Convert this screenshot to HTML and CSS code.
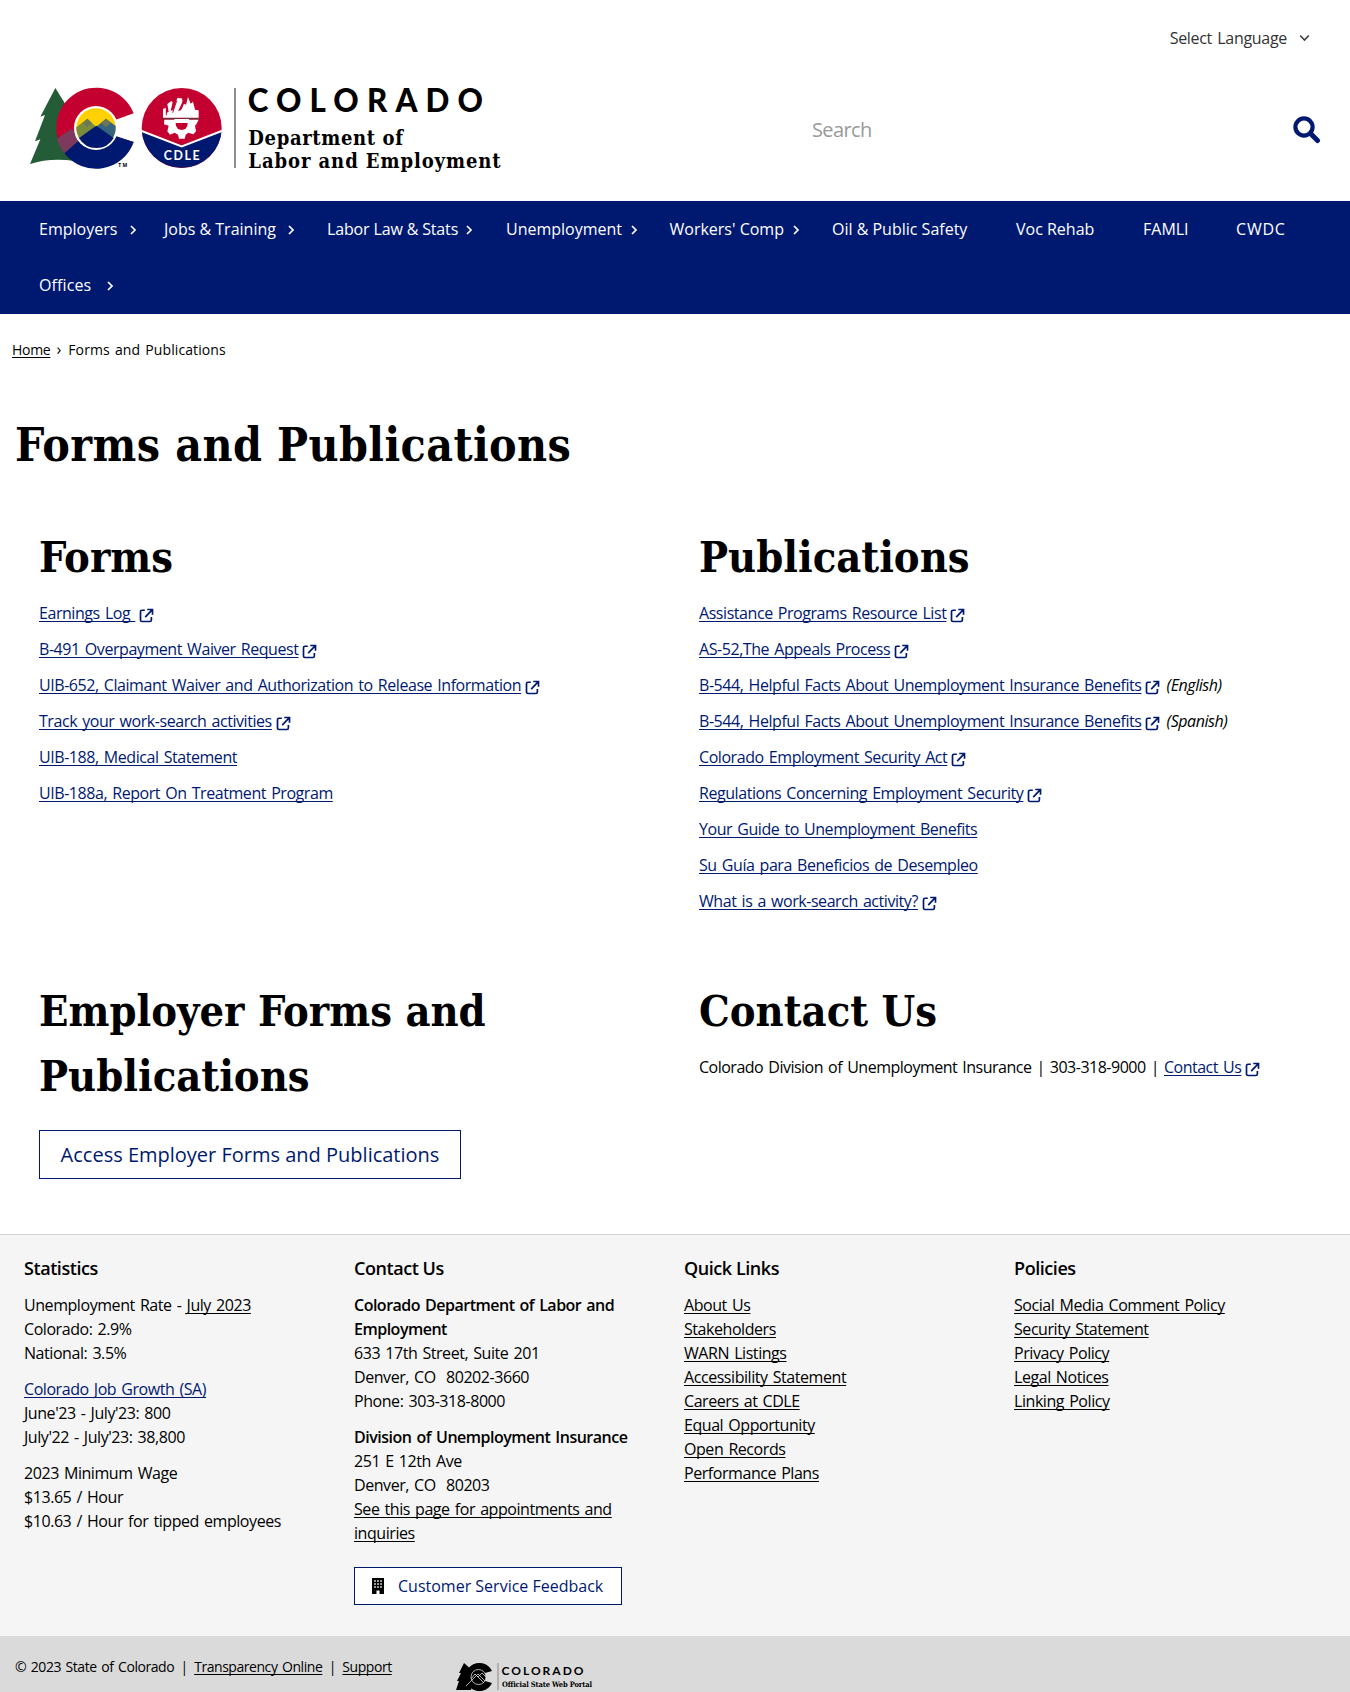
FILE: index.html
```html
<!DOCTYPE html>
<html lang="en">
<head>
<meta charset="utf-8">
<title>Forms and Publications | Department of Labor and Employment</title>
<link rel="stylesheet" href="styles.css">
</head>
<body>
<svg class="defs" width="0" height="0" aria-hidden="true">
  <symbol id="ext" viewBox="0 0 16 16"><path d="M6.2 2.4H3.2Q1.6 2.4 1.6 4V13Q1.6 14.4 3.2 14.4H11.6Q13.2 14.4 13.2 12.8V9.6M8.8 1.6H14.4V7.2M14 2L6.6 9.8" fill="none" stroke="currentColor" stroke-width="1.8"/></symbol>
  <symbol id="chev" viewBox="0 0 8 10"><path d="M2 1L6 5L2 9" fill="none" stroke="currentColor" stroke-width="1.7"/></symbol>
</svg>

<header class="header">
  <div class="language">Select Language
    <svg width="11" height="8" viewBox="0 0 11 8"><path d="M1.2 1.5L5.5 6L9.8 1.5" fill="none" stroke="#444" stroke-width="1.7"/></svg>
  </div>
  <div class="brand-row">
    <svg class="logo" width="480" height="95" viewBox="0 0 1440 285" role="img">
      <path d="M91 24L46 110L60 105L30 184L46 178L15 252Q75 232 150 243L180 140L126 80Z" fill="#235c37"/>
      <path d="M326 100A120 120 0 1 0 326 186L268 168L213 144L270 120Z" fill="#c3002f"/>
      <path d="M95 176L140 146L180 180L118 220Q102 200 95 176Z" fill="#7c3a5c"/>
      <path d="M118 220L214 136L272 168L326 186A120 120 0 0 1 118 220Z" fill="#001970"/>
      <circle cx="213" cy="144" r="66" fill="#fff"/>
      <circle cx="213" cy="144" r="59" fill="#ffd100"/>
      <path d="M154 142L187 116L214 141L165 178Q154 162 154 142Z" fill="#7a8b3c"/>
      <path d="M214 140L243 116L272 138Q273 160 262 176Z" fill="#35647e"/>
      <path d="M162 174L214 137L266 174A60 60 0 0 1 162 174Z" fill="#001970"/>
      <path d="M187 116L201 129L187 142L174 129ZM243 116L257 129L243 142L229 129Z" fill="#6d7758"/>
      <text x="280" y="262" class="tm" textLength="27">TM</text>
      <circle cx="470" cy="144" r="120" fill="#c3002f"/>
      <path d="M350.300 152L470 196L589.700 152A120 120 0 0 1 350.300 152Z" fill="#001970"/>
      <path d="M350 153L470 199L590 153" fill="none" stroke="#fff" stroke-width="6"/>
      <path d="M414 113V87L423 83V99L431 96L427 72L439 63L443 67L437 92L445 90L457 54L471 55L473 65L459 94L470 88L477 71L483 74L489 51L497 71L504 65L510 89L521 91V113Z" fill="#fff"/>
      <path d="M424 82V106M455 62L443 98M475 62L465 92" stroke="#c3002f" stroke-width="3"/>
      <path d="M412 116H525" stroke="#444" stroke-width="3"/>
      <path d="M418 119H521L514 133L510 137L513 154L505 163L490 158L482 164L479 176H462L459 164L449 158L435 164L427 154L431 137L417 133Z" fill="#fff"/>
      <circle cx="470" cy="132" r="18" fill="#c3002f"/>
      <path d="M448 117H492V129H448Z" fill="#fff"/>
      <text x="416" y="239" class="cdle" textLength="108">CDLE</text>
      <path d="M630 24V264" stroke="#555" stroke-width="4"/>
      <text x="668" y="96" class="state" textLength="706">COLORADO</text>
      <text x="670" y="195" class="dept" textLength="464">Department of</text>
      <text x="670" y="265" class="dept" textLength="757">Labor and Employment</text>
    </svg>
    <div class="search"><span>Search</span>
      <svg width="28" height="28" viewBox="0 0 28 28"><circle cx="11" cy="11" r="8.6" fill="none" stroke="#001970" stroke-width="4.2"/><path d="M17.5 17.5L24.5 24.5" stroke="#001970" stroke-width="5" stroke-linecap="round"/></svg>
    </div>
  </div>
</header>

<nav class="nav">
  <a class="n1">Employers<svg><use href="#chev"/></svg></a>
  <a>Jobs &amp; Training<svg><use href="#chev"/></svg></a>
  <a class="n-law">Labor Law &amp; Stats<svg><use href="#chev"/></svg></a>
  <a>Unemployment<svg><use href="#chev"/></svg></a>
  <a>Workers' Comp<svg><use href="#chev"/></svg></a>
  <a>Oil &amp; Public Safety</a>
  <a>Voc Rehab</a>
  <a>FAMLI</a>
  <a class="n-cwdc">CWDC</a>
  <a class="n-offices">Offices<svg><use href="#chev"/></svg></a>
</nav>

<div class="crumbs"><a>Home</a><span class="sep">›</span>Forms and Publications</div>

<main>
  <h1>Forms and Publications</h1>
  <div class="columns">
    <section class="upper">
      <h2>Forms</h2>
      <p><a>Earnings Log&nbsp;</a><svg class="ext"><use href="#ext"/></svg></p>
      <p><a>B-491 Overpayment Waiver Request</a><svg class="ext"><use href="#ext"/></svg></p>
      <p><a>UIB-652, Claimant Waiver and Authorization to Release Information</a><svg class="ext"><use href="#ext"/></svg></p>
      <p><a>Track your work-search activities</a><svg class="ext"><use href="#ext"/></svg></p>
      <p><a>UIB-188, Medical Statement</a></p>
      <p><a>UIB-188a, Report On Treatment Program</a></p>
    </section>
    <section class="upper">
      <h2>Publications</h2>
      <p><a>Assistance Programs Resource List</a><svg class="ext"><use href="#ext"/></svg></p>
      <p><a>AS-52,The Appeals Process</a><svg class="ext"><use href="#ext"/></svg></p>
      <p><a>B-544, Helpful Facts About Unemployment Insurance Benefits</a><svg class="ext"><use href="#ext"/></svg> <em>(English)</em></p>
      <p><a>B-544, Helpful Facts About Unemployment Insurance Benefits</a><svg class="ext"><use href="#ext"/></svg> <em>(Spanish)</em></p>
      <p><a>Colorado Employment Security Act</a><svg class="ext"><use href="#ext"/></svg></p>
      <p><a>Regulations Concerning Employment Security</a><svg class="ext"><use href="#ext"/></svg></p>
      <p><a>Your Guide to Unemployment Benefits</a></p>
      <p><a>Su Guía para Beneficios de Desempleo</a></p>
      <p><a>What is a work-search activity?</a><svg class="ext"><use href="#ext"/></svg></p>
    </section>
    <section>
      <h2>Employer Forms and<br>Publications</h2>
      <a class="button">Access Employer Forms and Publications</a>
    </section>
    <section>
      <h2>Contact Us</h2>
      <p class="contact">Colorado Division of Unemployment Insurance | 303-318-9000 | <a>Contact Us</a><svg class="ext"><use href="#ext"/></svg></p>
    </section>
  </div>
</main>

<footer class="footer">
  <div>
    <h3>Statistics</h3>
    <p>Unemployment Rate - <a>July 2023</a><br>Colorado: 2.9%<br>National: 3.5%</p>
    <p><a class="blue">Colorado Job Growth (SA)</a><br>June'23 - July'23: 800<br>July'22 - July'23: 38,800</p>
    <p>2023 Minimum Wage<br>$13.65 / Hour<br>$10.63 / Hour for tipped employees</p>
  </div>
  <div>
    <h3>Contact Us</h3>
    <p><b>Colorado Department of Labor and<br>Employment</b><br>633 17th Street, Suite 201<br>Denver, CO&nbsp; 80202-3660<br>Phone: 303-318-8000</p>
    <p><b>Division of Unemployment Insurance</b><br>251 E 12th Ave<br>Denver, CO&nbsp; 80203<br><a>See this page for appointments and<br>inquiries</a></p>
    <a class="feedback"><svg width="12" height="16" viewBox="0 0 12 16"><path d="M0 0H12V16H7.5V12.5H4.5V16H0Z" fill="#000"/><path d="M2.2 3H9.8M2.2 6H9.8M2.2 9H9.8" stroke="#fff" stroke-width="1.6" stroke-dasharray="1.6 1.4"/></svg>Customer Service Feedback</a>
  </div>
  <div>
    <h3>Quick Links</h3>
    <p><a>About Us</a><br><a>Stakeholders</a><br><a>WARN Listings</a><br><a>Accessibility Statement</a><br><a>Careers at CDLE</a><br><a>Equal Opportunity</a><br><a>Open Records</a><br><a>Performance Plans</a></p>
  </div>
  <div>
    <h3>Policies</h3>
    <p><a>Social Media Comment Policy</a><br><a>Security Statement</a><br><a>Privacy Policy</a><br><a>Legal Notices</a><br><a>Linking Policy</a></p>
  </div>
</footer>

<div class="bottom">
  <span>© 2023 State of Colorado</span><i>|</i><a>Transparency Online</a><i>|</i><a>Support</a>
  <svg class="portal" width="138" height="30" viewBox="0 0 138 30">
    <path d="M8 1L3 11H5L1 19H3L0 28H15L18 10Z"/>
    <path d="M36 9A14 14 0 1 0 36 21L29 19L22 15L29 11Z"/>
    <circle cx="22.500" cy="15" r="7.500" fill="#000" stroke="#dadada" stroke-width=".8"/>
    <path d="M10 24L22 12L29 19M15 17L19 12L22 15L26 11L30 15M19 12L28 21" fill="none" stroke="#dadada" stroke-width=".8"/>
    <path d="M42 1V28" stroke="#888"/>
    <text x="45.500" y="12.500" class="p-state" textLength="82">COLORADO</text>
    <text x="46" y="25" class="p-sub" textLength="90">Official State Web Portal</text>
  </svg>
</div>
</body>
</html>
```
FILE: styles.css
```css
* { box-sizing: border-box; }
body {
  margin: 0;
  width: 1350px;
  height: 1692px;
  overflow: hidden;
  background: #fff;
  color: #000;
  font: 16px/24px "Open Sans", sans-serif;
  letter-spacing: -0.44px;
  word-spacing: 1.4px;
}
p { margin: 0 0 12px; white-space: nowrap; }
a { text-decoration: underline; text-underline-offset: 2px; text-decoration-thickness: 1px; text-decoration-skip-ink: none; }
h1, h2, h3 { margin: 0; word-spacing: 0; }
.defs { display: block; height: 0; }

.header { height: 201px; padding: 25px 29px 0 25px; }
.language {
  display: flex;
  justify-content: flex-end;
  align-items: center;
  gap: 12px;
  height: 26px;
  padding-right: 11px;
  color: #333;
  letter-spacing: -0.3px;
}
.brand-row { display: flex; justify-content: space-between; padding-top: 29px; }
.logo { flex: none; word-spacing: 0; letter-spacing: 0; }
.tm { font: 700 15px "Open Sans", sans-serif; }
.cdle { font: 700 37px Lato, sans-serif; fill: #fff; }
.state { font: 900 94px Lato, sans-serif; }
.dept { font: 700 60px "DejaVu Serif Condensed", "DejaVu Serif", serif; }
.search {
  display: flex;
  justify-content: space-between;
  width: 509px;
  height: 28px;
  margin-top: 36px;
  color: #999;
  font-size: 20px;
  line-height: 28px;
  letter-spacing: -0.6px;
}

.nav {
  display: grid;
  grid-template-columns: 125px 163px 179px 163.5px 162.5px 184px 127px 93px auto;
  grid-auto-rows: 56px;
  height: 113px;
  padding-left: 39px;
  background: #001970;
  color: #fff;
  line-height: 57px;
  letter-spacing: 0;
  word-spacing: 0;
}
.nav a {
  display: flex;
  justify-content: space-between;
  align-items: center;
  padding-right: 32px;
  text-decoration: none;
  white-space: nowrap;
}
.nav a.n1 { padding-right: 27px; }
.nav a.n-law { padding-right: 33px; letter-spacing: -0.15px; }
.nav a.n-cwdc { letter-spacing: 0.8px; }
.nav a.n-offices { padding-right: 50px; letter-spacing: 0.1px; }
.nav svg { width: 8px; height: 10px; margin-top: 1px; }

.crumbs { display: flex; height: 72px; padding-left: 12px; line-height: 71px; font-size: 14px; letter-spacing: 0.1px; }
.crumbs a { letter-spacing: -0.3px; }
.sep { margin: 0 7px 0 6px; font-size: 16px; }

h1 {
  padding-left: 15px;
  font: 700 46px/118px "DejaVu Serif Condensed", "DejaVu Serif", serif;
  letter-spacing: 0.4px;
}
h2 { font: 700 43px/65px "DejaVu Serif Condensed", "DejaVu Serif", serif; letter-spacing: 0; padding-bottom: 11px; }
.columns { display: grid; grid-template-columns: 660px auto; padding: 21px 0 0 39px; height: 730px; align-content: start; }
.upper { height: 454px; }
.columns a { color: #001970; }
.ext { width: 15px; height: 15px; margin-left: 4px; vertical-align: -3.500px; color: #001970; }
em { margin-left: 1px; }
.contact { letter-spacing: -0.5px; }
.columns .button {
  display: flex;
  align-items: center;
  justify-content: center;
  width: 422px;
  height: 49px;
  border: 1px solid #001970;
  font-size: 20px;
  letter-spacing: 0;
  word-spacing: 0;
  text-decoration: none;
}
.columns section:nth-child(3) h2 { padding-bottom: 21px; }

.footer {
  display: grid;
  grid-template-columns: repeat(4, 330px);
  height: 402px;
  padding: 22px 0 0 24px;
  border-top: 1px solid #d2d2d2;
  background: #f5f5f5;
}
h3 { font-size: 18px; line-height: 23px; font-weight: 600; margin-bottom: 13px; }
b { font-weight: 600; letter-spacing: -0.5px; }
.blue { color: #001970; }
.feedback {
  display: flex;
  align-items: center;
  gap: 14px;
  width: 268px;
  height: 38px;
  margin-top: 22px;
  padding-left: 17px;
  border: 1px solid #001970;
  background: #fff;
  color: #001970;
  letter-spacing: 0;
  word-spacing: 0;
  text-decoration: none;
}

.bottom { display: flex; height: 56px; padding-left: 15px; background: #dadada; font-size: 14px; line-height: 62px; letter-spacing: -0.45px; }
.bottom i { width: 20px; text-align: center; font-style: normal; }
.bottom > a:nth-of-type(2) { width: 48px; }
.portal { margin: 26px 0 0 66px; letter-spacing: 0; word-spacing: 0; }
.p-state { font: 700 12px Lato, sans-serif; }
.p-sub { font: 700 7.500px "DejaVu Serif Condensed", "DejaVu Serif", serif; }
```
